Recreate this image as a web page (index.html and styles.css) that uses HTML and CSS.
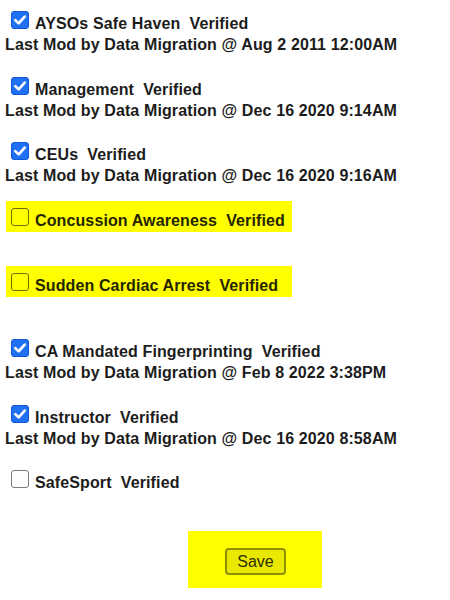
FILE: index.html
```html
<!DOCTYPE html>
<html>
<head>
<meta charset="utf-8">
<link rel="stylesheet" href="styles.css">
</head>
<body>
<div class="list">
  <div class="item">
    <div class="label"><span class="box checked"><svg viewBox="0 0 18 18" width="18" height="18"><polyline points="4.3,9.1 7.7,12.4 13.7,5.6" /></svg></span>AYSOs Safe Haven&nbsp; Verified</div>
    <div class="mod">Last Mod by Data Migration @ Aug 2 2011 12:00AM</div>
  </div>
  <div class="item">
    <div class="label"><span class="box checked"><svg viewBox="0 0 18 18" width="18" height="18"><polyline points="4.3,9.1 7.7,12.4 13.7,5.6" /></svg></span>Management&nbsp; Verified</div>
    <div class="mod">Last Mod by Data Migration @ Dec 16 2020 9:14AM</div>
  </div>
  <div class="item">
    <div class="label"><span class="box checked"><svg viewBox="0 0 18 18" width="18" height="18"><polyline points="4.3,9.1 7.7,12.4 13.7,5.6" /></svg></span>CEUs&nbsp; Verified</div>
    <div class="mod">Last Mod by Data Migration @ Dec 16 2020 9:16AM</div>
  </div>
  <div class="item hl">
    <div class="label mark"><span class="box"></span>Concussion Awareness&nbsp; Verified</div>
  </div>
  <div class="item hl">
    <div class="label mark"><span class="box"></span>Sudden Cardiac Arrest&nbsp; Verified</div>
  </div>
  <div class="item">
    <div class="label"><span class="box checked"><svg viewBox="0 0 18 18" width="18" height="18"><polyline points="4.3,9.1 7.7,12.4 13.7,5.6" /></svg></span>CA Mandated Fingerprinting&nbsp; Verified</div>
    <div class="mod">Last Mod by Data Migration @ Feb 8 2022 3:38PM</div>
  </div>
  <div class="item">
    <div class="label"><span class="box checked"><svg viewBox="0 0 18 18" width="18" height="18"><polyline points="4.3,9.1 7.7,12.4 13.7,5.6" /></svg></span>Instructor&nbsp; Verified</div>
    <div class="mod">Last Mod by Data Migration @ Dec 16 2020 8:58AM</div>
  </div>
  <div class="item">
    <div class="label"><span class="box"></span>SafeSport&nbsp; Verified</div>
  </div>
</div>
<div class="save-wrap"><button class="save" type="button">Save</button></div>
</body>
</html>
```
FILE: styles.css
```css
html, body {
  margin: 0;
  padding: 0;
  background: #ffffff;
}

body {
  font-family: "Liberation Sans", Arial, sans-serif;
  color: #1c1c1c;
}

.list {
  padding-left: 5px;
}

.item {
  box-sizing: border-box;
  height: 65.6px;
  padding-top: 13px;
}

.item.hl {
  padding-top: 4px;
}

.label,
.mod {
  font-size: 16px;
  font-weight: bold;
  line-height: 21px;
  letter-spacing: 0.12px;
  white-space: nowrap;
}

.label {
  padding-left: 6px;
}

.box {
  display: inline-block;
  box-sizing: border-box;
  width: 18px;
  height: 18px;
  margin: -4px 6px 0 0;
  border: 1.5px solid #7a7a7a;
  border-radius: 3px;
  background: #ffffff;
  vertical-align: 0;
}

.box svg {
  display: block;
  margin: -1px;
}

.box.checked {
  border: 1px solid #1558d6;
  background: #1f70f2;
}

.box polyline {
  fill: none;
  stroke: #ffffff;
  stroke-width: 2.7;
  stroke-linecap: round;
  stroke-linejoin: round;
}

.label.mark {
  box-sizing: border-box;
  width: 286px;
  margin-left: 1px;
  padding: 9px 0 1px 5px;
  background: #ffff00;
  color: #252500;
}

.mark .box {
  background: transparent;
  border-color: #707000;
}

.save-wrap {
  box-sizing: border-box;
  width: 134px;
  height: 57px;
  margin: 6px 0 0 188px;
  padding: 17px 0 0 37px;
  background: #ffff00;
}

.save {
  box-sizing: border-box;
  width: 61px;
  height: 27px;
  padding: 0;
  border: 2px solid #8f8f00;
  border-radius: 4px;
  background: #e8e800;
  color: #2e2e00;
  font-family: "Liberation Sans", Arial, sans-serif;
  font-size: 16px;
  line-height: 21px;
}
```
